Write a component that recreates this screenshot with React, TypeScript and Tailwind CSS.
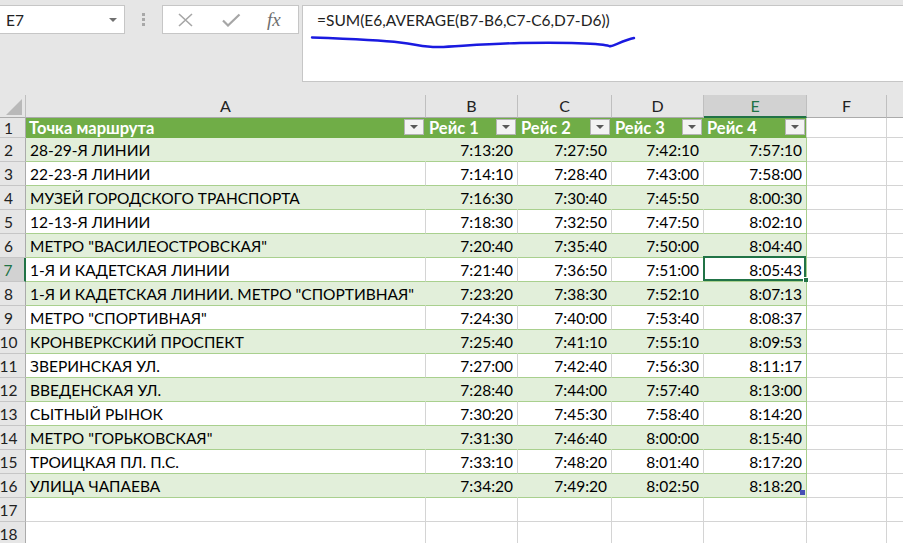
import React from "react";

type Row = [string, string, string, string, string];

const rows: Row[] = [
  ["28-29-Я ЛИНИИ", "7:13:20", "7:27:50", "7:42:10", "7:57:10"],
  ["22-23-Я ЛИНИИ", "7:14:10", "7:28:40", "7:43:00", "7:58:00"],
  ["МУЗЕЙ ГОРОДСКОГО ТРАНСПОРТА", "7:16:30", "7:30:40", "7:45:50", "8:00:30"],
  ["12-13-Я ЛИНИИ", "7:18:30", "7:32:50", "7:47:50", "8:02:10"],
  ["МЕТРО \"ВАСИЛЕОСТРОВСКАЯ\"", "7:20:40", "7:35:40", "7:50:00", "8:04:40"],
  ["1-Я И КАДЕТСКАЯ ЛИНИИ", "7:21:40", "7:36:50", "7:51:00", "8:05:43"],
  ["1-Я И КАДЕТСКАЯ ЛИНИИ. МЕТРО \"СПОРТИВНАЯ\"", "7:23:20", "7:38:30", "7:52:10", "8:07:13"],
  ["МЕТРО \"СПОРТИВНАЯ\"", "7:24:30", "7:40:00", "7:53:40", "8:08:37"],
  ["КРОНВЕРКСКИЙ ПРОСПЕКТ", "7:25:40", "7:41:10", "7:55:10", "8:09:53"],
  ["ЗВЕРИНСКАЯ УЛ.", "7:27:00", "7:42:40", "7:56:30", "8:11:17"],
  ["ВВЕДЕНСКАЯ УЛ.", "7:28:40", "7:44:00", "7:57:40", "8:13:00"],
  ["СЫТНЫЙ РЫНОК", "7:30:20", "7:45:30", "7:58:40", "8:14:20"],
  ["МЕТРО \"ГОРЬКОВСКАЯ\"", "7:31:30", "7:46:40", "8:00:00", "8:15:40"],
  ["ТРОИЦКАЯ ПЛ. П.С.", "7:33:10", "7:48:20", "8:01:40", "8:17:20"],
  ["УЛИЦА ЧАПАЕВА", "7:34:20", "7:49:20", "8:02:50", "8:18:20"],
];

const widths = ["w-[400px]", "w-[92px]", "w-[94px]", "w-[92px]", "w-[103px]"];

function Filter() {
  return (
    <div className="self-start mt-[1px] mr-[1px] w-[20px] h-[16px] shrink-0 border border-[#b4b4b4] bg-[#f3f3f3] flex items-center justify-center">
      <svg width="8" height="4" viewBox="0 0 8 4">
        <path d="M0 0h8L4 4z" fill="#595959" />
      </svg>
    </div>
  );
}

function RowHeader({ n }: { n: number }) {
  const active = n === 7;
  return (
    <div
      className={
        active
          ? "w-[26px] shrink-0 h-full bg-[#d2d2d2] border-r-2 border-b border-r-[#217346] border-b-[#c6c6c6] flex items-center justify-center pr-[8px] text-[#217346]"
          : "w-[26px] shrink-0 h-full bg-[#e6e6e6] border-r border-b border-r-[#ababab] border-b-[#c6c6c6] flex items-center justify-center pr-[8px] text-[#222]"
      }
    >
      {n}
    </div>
  );
}

function FCells() {
  return (
    <>
      <div className="w-[80px] shrink-0 h-full bg-white border-r border-b border-r-[#d4d4d4] border-b-[#d4d4d4]" />
      <div className="flex-1 h-full bg-white border-b border-b-[#d4d4d4]" />
    </>
  );
}

function DataRow({ n, r }: { n: number; r: Row }) {
  const green = n % 2 === 0;
  return (
    <div className="flex h-[24px]">
      <RowHeader n={n} />
      {r.map((v, i) => {
        const isE = i === 4;
        let cls = "";
        if (green) {
          cls = isE
            ? "bg-[#e2efda] border-r border-b border-r-[#a9d08e] border-b-[#a9d08e]"
            : "bg-[#e2efda] border-r border-b border-r-[#e2efda] border-b-[#a9d08e]";
        } else {
          cls = isE
            ? "bg-white border-r border-b border-r-[#a9d08e] border-b-[#a9d08e]"
            : "bg-white border-r border-b border-r-[#d4d4d4] border-b-[#a9d08e]";
        }
        return (
          <div
            key={i}
            className={`${widths[i]} ${cls} shrink-0 h-full flex items-center relative ${
              i === 0 ? "pl-[4px] justify-start" : "pr-[4px] justify-end"
            }`}
          >
            <span className="whitespace-nowrap">{v}</span>
            {isE && n === 7 && (
              <>
                <div className="absolute -left-[1px] -top-[2px] right-0 bottom-0 border-2 border-[#217346]" />
                <div className="absolute -right-[3px] -bottom-[2px] w-[6px] h-[6px] bg-[#217346] border border-white" />
              </>
            )}
            {isE && n === 16 && (
              <div className="absolute right-[1px] bottom-[2px] w-[5px] h-[5px] bg-[#4651b5]" />
            )}
          </div>
        );
      })}
      <FCells />
    </div>
  );
}

function HeaderRow() {
  const titles = ["Точка маршрута", "Рейс 1", "Рейс 2", "Рейс 3", "Рейс 4"];
  return (
    <div className="flex h-[20px]">
      <RowHeader n={1} />
      {titles.map((t, i) => (
        <div
          key={i}
          className={`${widths[i]} ${
            i === 4 ? "border-r-[#d4d4d4]" : "border-r-[#70ad47]"
          } shrink-0 h-full bg-[#70ad47] border-r border-b border-b-[#70ad47] flex items-center justify-between pl-[3px] text-white font-bold text-[16.5px]`}
        >
          <span className="whitespace-nowrap">{t}</span>
          <Filter />
        </div>
      ))}
      <FCells />
    </div>
  );
}

function EmptyRow({ n }: { n: number }) {
  return (
    <div className="flex h-[24px]">
      <RowHeader n={n} />
      {widths.map((w, i) => (
        <div
          key={i}
          className={`${w} shrink-0 h-full bg-white border-r border-b border-r-[#d4d4d4] border-b-[#d4d4d4]`}
        />
      ))}
      <FCells />
    </div>
  );
}

function ColumnHeaders() {
  const letters = ["A", "B", "C", "D", "E"];
  return (
    <div className="flex h-[23px] bg-[#e6e6e6] text-[16px]">
      <div className="w-[26px] shrink-0 h-full border-r border-b border-r-[#bfbfbf] border-b-[#ababab] relative">
        <svg className="absolute left-0 top-0" width="26" height="23" viewBox="0 0 26 23">
          <path d="M22 4V20H6z" fill="#b9b9b9" />
        </svg>
      </div>
      {letters.map((l, i) => (
        <div
          key={l}
          className={`${widths[i]} ${
            l === "E"
              ? "bg-[#d2d2d2] border-b-2 border-b-[#217346] text-[#217346]"
              : "border-b border-b-[#ababab] text-[#222]"
          } shrink-0 h-full border-r border-r-[#bfbfbf] flex items-center justify-center`}
        >
          {l}
        </div>
      ))}
      <div className="w-[80px] shrink-0 h-full border-r border-b border-r-[#bfbfbf] border-b-[#ababab] flex items-center justify-center text-[#222]">
        F
      </div>
      <div className="flex-1 h-full border-b border-b-[#ababab]" />
    </div>
  );
}

function Toolbar() {
  return (
    <div className="h-[95px] bg-[#e6e6e6] flex items-start pt-[5px]">
      <div className="-ml-[1px] w-[126px] h-[29px] shrink-0 bg-white border border-[#c6c6c6] flex items-center justify-between pl-[6px] pr-[7px] text-[#222]">
        <span>E7</span>
        <svg width="8" height="4" viewBox="0 0 8 4">
          <path d="M0 0h8L4 4z" fill="#707070" />
        </svg>
      </div>
      <div className="ml-[17px] mt-[8px] flex flex-col gap-[2px] shrink-0">
        <div className="w-[3px] h-[3px] bg-[#a8a8a8]" />
        <div className="w-[3px] h-[3px] bg-[#a8a8a8]" />
        <div className="w-[3px] h-[3px] bg-[#a8a8a8]" />
      </div>
      <div className="ml-[17px] w-[137px] h-[29px] shrink-0 bg-white border border-[#c6c6c6] relative flex items-center">
        <svg className="ml-[14px]" width="17" height="14" viewBox="0 0 17 14">
          <path d="M2 1L15 13M15 1L2 13" stroke="#a6a6a6" strokeWidth="1.6" fill="none" />
        </svg>
        <svg className="ml-[28px]" width="19" height="14" viewBox="0 0 19 14">
          <path d="M1 7.5L6 12.5L17.5 1.5" stroke="#a6a6a6" strokeWidth="2.2" fill="none" />
        </svg>
        <span className="ml-[26px] font-['Liberation_Serif',serif] italic text-[19px] text-[#6f6f6f] leading-none">
          fx
        </span>
      </div>
      <div className="ml-[3px] flex-1 h-[77px] bg-white border border-r-0 border-[#c6c6c6] pl-[14px] pt-[5px] text-[#222] whitespace-nowrap">
        =SUM(E6,AVERAGE(B7-B6,C7-C6,D7-D6))
      </div>
    </div>
  );
}

export default function App() {
  return (
    <div className="w-[903px] h-[543px] overflow-hidden bg-white relative font-[Lato,'Noto_Sans',sans-serif] text-[15.5px] leading-[18px] text-black">
      <Toolbar />
      <ColumnHeaders />
      <HeaderRow />
      {rows.map((r, i) => (
        <DataRow key={i} n={i + 2} r={r} />
      ))}
      <EmptyRow n={17} />
      <EmptyRow n={18} />
      <svg
        className="absolute left-0 top-0 pointer-events-none"
        width="903"
        height="95"
        viewBox="0 0 903 95"
      >
        <path
          d="M312 37.5 C340 38.5 380 40 400 42.5 S425 47.5 440 47 S490 43.5 520 43 S585 43 600 44.5 S607 47 611 46 S625 40 634 38"
          stroke="#1a1ae0"
          strokeWidth="2.4"
          fill="none"
          strokeLinecap="round"
        />
      </svg>
    </div>
  );
}
